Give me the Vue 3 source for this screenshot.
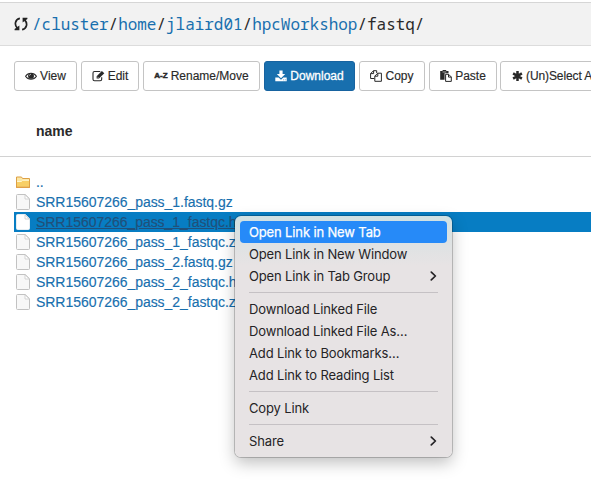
<script setup>
const crumbs = ['cluster', 'home', 'jlaird01', 'hpcWorkshop']
const buttons = [
  { label: 'View', icon: 'eye', cls: 'view' },
  { label: 'Edit', icon: 'edit', cls: 'edit' },
  { label: 'Rename/Move', icon: 'az', cls: 'rename' },
  { label: 'Download', icon: 'download', cls: 'download' },
  { label: 'Copy', icon: 'copy', cls: 'copy' },
  { label: 'Paste', icon: 'paste', cls: 'paste' },
  { label: '(Un)Select A', icon: 'star', cls: 'select' },
]
const files = [
  'SRR15607266_pass_1.fastq.gz',
  'SRR15607266_pass_1_fastqc.html',
  'SRR15607266_pass_1_fastqc.zip',
  'SRR15607266_pass_2.fastq.gz',
  'SRR15607266_pass_2_fastqc.html',
  'SRR15607266_pass_2_fastqc.zip',
]
const selected = 1
const groups = [
  [{ t: 'Open Link in New Tab', on: true }, { t: 'Open Link in New Window' }, { t: 'Open Link in Tab Group', sub: true }],
  [{ t: 'Download Linked File' }, { t: 'Download Linked File As…' }, { t: 'Add Link to Bookmarks…' }, { t: 'Add Link to Reading List' }],
  [{ t: 'Copy Link' }],
  [{ t: 'Share', sub: true }],
]
</script>

<template>
  <div class="page">
    <header class="path">
      <svg class="sync" width="14" height="14" viewBox="0 0 14 14">
        <g v-for="r in [0, 180]" :key="r" :transform="`rotate(${r} 7 7)`">
          <path d="M5.900 1.400C1.300 2.100-.1 7.500 3.300 11.200" fill="none" stroke="#222" stroke-width="1.700" />
          <path d="M.6 13.200V12.100L5.400 8.400V13.200Z" fill="#222" />
        </g>
      </svg>
      <span class="crumbs"><template v-for="(c, i) in crumbs" :key="c"><a v-if="i === 0">/{{ c }}</a><template v-else>/<a>{{ c }}</a></template></template>/fastq/</span>
    </header>

    <div class="toolbar">
      <button v-for="b in buttons" :key="b.label" class="btn" :class="b.cls">
        <svg v-if="b.icon === 'eye'" width="12" height="12" viewBox="0 0 13 12">
          <path d="M.6 6.200C3.400 1.800 9.600 1.800 12.400 6.200C9.600 10.500 3.400 10.500.6 6.200Z" fill="none" stroke="currentColor" stroke-width="1.100" />
          <circle cx="6.500" cy="5.900" r="3.200" fill="currentColor" />
          <path d="M4.900 5.600Q5 4.200 6.400 4.100" fill="none" stroke="#fff" stroke-width=".7" />
        </svg>
        <svg v-else-if="b.icon === 'edit'" width="13" height="12" viewBox="0 0 13 12">
          <path d="M8.300 1.500H2.500Q1 1.500 1 3V9.200Q1 10.700 2.500 10.700H8.200Q9.700 10.700 9.700 9.200V7.300" fill="none" stroke="currentColor" stroke-width="1.100" />
          <path d="M4.600 6.200L9.900.9L12.300 3.300L7 8.600H4.600Z" fill="currentColor" />
          <path d="M5.300 6.700L6.500 7.900" stroke="#fff" stroke-width=".6" />
        </svg>
        <span v-else-if="b.icon === 'az'" class="az">A-Z</span>
        <svg v-else-if="b.icon === 'download'" width="12" height="12" viewBox="0 0 12 12">
          <path d="M4.400.6H7.600V4H10.200L6 8.200L1.800 4H4.400Z" fill="currentColor" />
          <path d="M.3 7.500H3.600L6 9.700L8.400 7.500H11.700V11.200H.3Z" fill="currentColor" />
          <path d="M8.300 9.800H9.100M9.900 9.800H10.700" stroke="#186fae" stroke-width=".7" />
        </svg>
        <svg v-else-if="b.icon === 'copy'" width="12" height="12" viewBox="0 0 12 12">
          <path d="M4.300 8.500H.6V3.600L3.500.7H6.700V3M3.600.7V3.600H.6M7.700 3.200H11.400V11.300H4.800V6.100ZM7.800 3.200V6.200H4.800" fill="none" stroke="currentColor" stroke-width="1" />
        </svg>
        <svg v-else-if="b.icon === 'paste'" width="12" height="12" viewBox="0 0 12 12">
          <path d="M.2 1H2.600V0H6.200V1H8.500V3.300H4.600V9.700H.2Z" fill="currentColor" />
          <path d="M2.500 2H6.300" stroke="#fff" stroke-width=".6" />
          <path d="M5.600 4.300H8.600L11.300 7V11.400H5.600ZM8.500 4.300V7.100H11.300" fill="#fff" stroke="currentColor" stroke-width="1" />
        </svg>
        <svg v-else width="11" height="12" viewBox="0 0 11 12">
          <path d="M5.500.9V11.100M1.100 3.450L9.900 8.550M1.100 8.550L9.900 3.450" stroke="currentColor" stroke-width="2.500" />
        </svg>
        <span class="lbl">{{ b.label }}</span>
      </button>
    </div>

    <div class="thead">name</div>

    <ul class="list">
      <li class="row">
        <svg width="16" height="16" viewBox="0 0 16 16">
          <path d="M1.500 3H6.500L7.500 4.500H14.500V13H1.500Z" fill="#fbe7a5" stroke="#dda045" />
          <path d="M2 7.500H6.500L7.500 6.500H14V12.500H2Z" fill="#f8cf66" />
          <path d="M2 7.500H6.500L7.500 6.300H14" fill="none" stroke="#fff6cf" />
          <path d="M1 13.300H15" stroke="#de9432" />
        </svg>
        <a>..</a>
      </li>
      <li v-for="(f, i) in files" :key="f" class="row" :class="{ selected: i === selected }">
        <svg width="16" height="16" viewBox="0 0 16 16">
          <path d="M2.500.5H10.300L14.500 4.700V14.500Q14.500 15.500 13.500 15.500H2.500Q1.500 15.500 1.500 14.500V1.500Q1.500.5 2.500.5Z" :fill="i === selected ? '#fff' : '#f8f8f8'" :stroke="i === selected ? '#e6eef3' : '#c2c2c2'" />
          <path d="M10 .8V5H14.300Z" fill="#fff" stroke="#c9c9c9" stroke-width=".8" />
        </svg>
        <a>{{ f }}</a>
      </li>
    </ul>

    <nav class="menu">
      <div v-for="(g, gi) in groups" :key="gi" class="group">
        <div v-for="m in g" :key="m.t" class="item" :class="{ on: m.on }">
          <span>{{ m.t }}</span>
          <svg v-if="m.sub" width="7" height="10" viewBox="0 0 7 10">
            <path d="M1.300 1.100L5.400 5L1.300 8.900" fill="none" stroke="#252326" stroke-width="1.700" stroke-linecap="round" stroke-linejoin="round" />
          </svg>
        </div>
      </div>
    </nav>
  </div>
</template>

<style>
body { margin: 0; background: #fff; overflow: hidden; }
</style>

<style scoped>
* { box-sizing: border-box; }
.page { position: relative; width: 591px; height: 483px; overflow: hidden; background: #fff; padding-top: 2px; font-family: "Liberation Sans", Arial, sans-serif; color: #2b2b2b; }
.path { height: 44px; display: flex; align-items: center; padding-left: 14px; background: #f2f2f2; border-top: 1px solid #d6d6d6; border-bottom: 1px solid #dcdcdc; }
.sync { flex: none; margin-right: 4px; }
.crumbs { font: 16px/22px "Noto Sans Mono", "DejaVu Sans Mono", monospace; letter-spacing: -.03px; white-space: pre; color: #292929; padding-bottom: 1px; }
a { color: #186fae; }
.toolbar { display: flex; gap: 4px; padding: 15px 0 0 14px; }
.btn { flex: none; height: 30px; display: flex; align-items: center; justify-content: center; gap: 3px; padding: 0; border: 1px solid #c4c4c4; border-radius: 3px; background: #fff; color: #292929; font: 12px/18px "Liberation Sans", Arial, sans-serif; white-space: nowrap; -webkit-text-stroke: .15px currentColor; }
.btn svg { flex: none; }
.view { width: 63px; }
.edit { width: 58px; }
.rename { width: 117px; }
.download { width: 91px; background: #186fae; border-color: #1763a0; color: #fff; -webkit-text-stroke: .3px #fff; }
.copy { width: 66px; }
.paste { width: 68px; }
.select { width: 106px; margin-left: -1px; justify-content: flex-start; padding-left: 11px; }
.select .lbl { letter-spacing: -.1px; }
.az { font-size: 8px; font-weight: 700; -webkit-text-stroke: .5px currentColor; }
.thead { height: 66px; padding: 0 0 0 36px; line-height: 80px; font-size: 14px; font-weight: 700; border-bottom: 1px solid #d2d2d2; }
.list { list-style: none; margin: 15px 0 0 14px; padding: 0; }
.row { height: 20px; display: flex; align-items: center; gap: 5px; padding-left: 1px; font-size: 14px; line-height: 20px; white-space: nowrap; letter-spacing: -.04px; }
.row a { -webkit-text-stroke: .15px currentColor; }
.selected { background: #077dc3; }
.selected a { color: #20507a; text-decoration: underline; }
.menu { position: absolute; left: 235px; top: 216px; width: 217px; height: 241px; padding: 5px; border-radius: 6px; background: linear-gradient(#cfe0e2 0, #dfe2e3 30px, #e7e3e4 50px); box-shadow: 0 0 0 1px rgba(0, 0, 0, .2), 0 6px 16px rgba(0, 0, 0, .25); font: 13px/22px Inter, sans-serif; letter-spacing: -.14px; color: #252326; }
.group + .group { margin-top: 5px; padding-top: 5px; position: relative; border-top: 1px solid transparent; }
.group + .group::before { content: ""; position: absolute; top: -1px; left: 9px; right: 9px; height: 1px; background: #c5c1c4; }
.item { height: 22px; display: flex; align-items: center; justify-content: space-between; padding: 0 10px 0 9px; border-radius: 4px; white-space: nowrap; }
.on { background: #268af8; color: #fff; -webkit-text-stroke: .25px #fff; }
</style>
